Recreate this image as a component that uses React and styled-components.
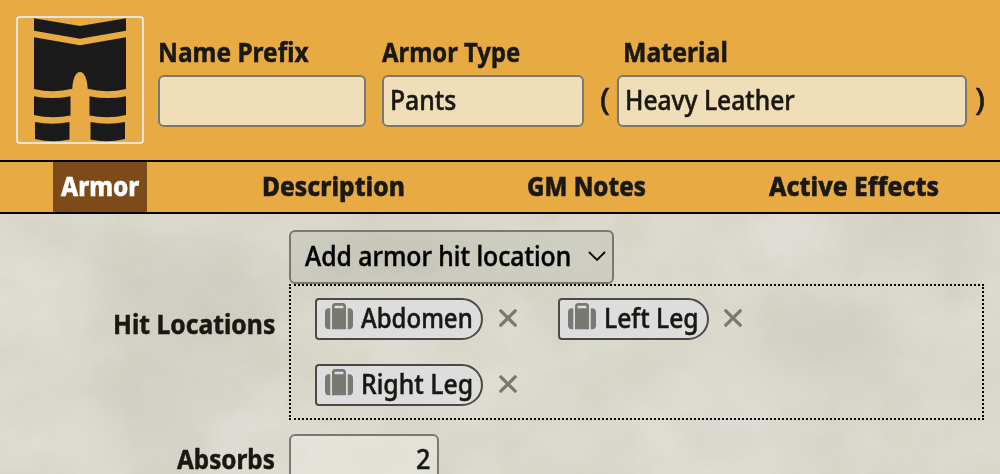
import React, { useLayoutEffect, useRef, useState } from "react";
import styled, { createGlobalStyle, css } from "styled-components";

const Global = createGlobalStyle`
  * { box-sizing: border-box; }
  html, body { margin: 0; padding: 0; overflow: hidden; }
  body {
    font-family: "Noto Sans", "Open Sans", sans-serif;
    font-size: 27px;
    line-height: 1;
    color: #191813;
    background: #d9d8cc;
  }
`;

const TextSlot = styled.span`
  display: flex;
  flex: none;
  width: ${(p) => p.$width}px;
  line-height: 26px;
  white-space: nowrap;
  -webkit-text-stroke: 0.5px currentColor;
`;

const TextInner = styled.span`
  display: inline-block;
  flex: none;
  transform-origin: 0 50%;
`;

/* Condenses a string horizontally so that it takes the given width. */
function Text({ width, children }) {
  const ref = useRef(null);
  const [scale, setScale] = useState(1);
  useLayoutEffect(() => {
    setScale(width / ref.current.offsetWidth);
  }, [width, children]);
  return (
    <TextSlot $width={width}>
      <TextInner ref={ref} style={{ transform: `scaleX(${scale})` }}>
        {children}
      </TextInner>
    </TextSlot>
  );
}

const Sheet = styled.div`
  width: 1000px;
  height: 474px;
  overflow: hidden;
  display: flex;
  flex-direction: column;
`;

const Header = styled.header`
  flex: none;
  height: 162px;
  padding: 16px 0 0 16px;
  display: flex;
  align-items: flex-start;
  background: #e8aa43;
  border-bottom: 2px solid #000;
`;

const Portrait = styled.div`
  width: 128px;
  height: 128px;
  margin-right: 14px;
  border: 2px solid #e6e3dd;
  border-radius: 4px;
  svg { display: block; }
`;

const Field = styled.div`
  width: ${(p) => p.$width}px;
  margin-right: ${(p) => p.$gap}px;
  padding-top: 23px;
`;

const FieldLabel = styled.div`
  height: 36px;
  padding-left: ${(p) => p.$indent || 0}px;
  font-weight: 700;
`;

const inputBox = css`
  border: 2px solid #7a7971;
  border-radius: 6px;
  display: flex;
  align-items: center;
`;

const TextInput = styled.div`
  ${inputBox}
  height: 52px;
  padding: 0 0 2px 6px;
  background: #f0deb8;
  font-weight: 500;
`;

const Paren = styled.div`
  width: ${(p) => p.$width}px;
  padding: 70px 0 0 1px;
  font-size: 30px;
`;

const Tabs = styled.nav`
  flex: none;
  height: 52px;
  display: flex;
  justify-content: space-around;
  background: #e8aa43;
  border-bottom: 2px solid #000;
`;

const Tab = styled.div`
  padding: 11px 8px 0;
  font-weight: 800;
  color: ${(p) => (p.$active ? "#fff" : "#191813")};
  background: ${(p) => (p.$active ? "#7d4a1a" : "transparent")};
`;

const Body = styled.main`
  position: relative;
  flex: 1;
  padding: 16px 16px 0 0;
`;

const Texture = styled.svg`
  position: absolute;
  inset: 0;
`;

const Row = styled.div`
  position: relative;
  display: flex;
  align-items: center;
  margin-bottom: 14px;
`;

const RowLabel = styled.div`
  width: 289px;
  padding: 0 14px 3px 0;
  display: flex;
  justify-content: flex-end;
  font-weight: 700;
`;

const RowContent = styled.div`
  flex: 1;
`;

const Select = styled.div`
  ${inputBox}
  width: 325px;
  height: 54px;
  padding: 0 6px 2px 14px;
  justify-content: space-between;
  background: rgba(0, 0, 0, 0.05);
  color: #000;
  font-weight: 500;
`;

const DropZone = styled.div`
  height: 136px;
  padding: 12px 24px;
  border: 2px dotted #000;
  display: flex;
  flex-wrap: wrap;
  align-content: flex-start;
  gap: 24px 41px;
`;

const Location = styled.div`
  display: flex;
  align-items: center;
  gap: 15px;
  &:nth-child(2) { margin-right: 100px; }
  > svg { margin: 0 0 3px 0.5px; }
`;

const Chip = styled.div`
  height: 42px;
  padding: 0 8px 2px 8px;
  display: flex;
  align-items: center;
  gap: 8px;
  border: 2px solid #4b4a44;
  border-radius: 4px 21px 21px 4px;
  background: #dddddd;
  font-weight: 500;
`;

const NumberInput = styled.div`
  ${inputBox}
  width: 150px;
  height: 52px;
  padding: 0 7px 2px 0;
  justify-content: flex-end;
  background: rgba(255, 255, 255, 0.25);
  font-weight: 500;
`;

const Pants = () => (
  <svg width="124" height="124" viewBox="18 18 124 124" fill="#1a1a1a">
    <path d="M34 18.3 80 26l46-7.7v12.5L80 38.7 34 30.8Z" />
    <path d="M34 37.2 80 45.2l46-8V89q-19.500 4.500-38.300-.2C87.200 79 84.500 72 80 72s-7.200 7-7.700 16.800Q53.500 93.500 34 89Z" />
    <path d="M34 96.200q18 3.800 36.500 0v19.200q-18 3.800-36.500-.4Z" />
    <path d="M126 96.200q-18 3.800-36.500 0v19.200q18 3.800 36.500-.4Z" />
    <path d="M35 122q17 3.400 34.500 0v17.500q-17 3.600-34.500-.5Z" />
    <path d="M125 122q-17 3.400-34.500 0v17.500q17 3.600 34.500-.5Z" />
  </svg>
);

const Suitcase = () => (
  <svg width="28" height="30" viewBox="0 0 512 548" fill="#7a7971">
    <path d="M176 56v40h160V56c0-4.400-3.600-8-8-8H184c-4.400 0-8 3.600-8 8zm-48 40V56c0-30.900 25.100-56 56-56h144c30.900 0 56 25.100 56 56v424H128V96zM64 96h32v384H64c-35.300 0-64-28.700-64-64V160c0-35.300 28.700-64 64-64zm384 384h-32V96h32c35.300 0 64 28.700 64 64v256c0 35.300-28.700 64-64 64z" />
  </svg>
);

const Cross = () => (
  <svg width="18" height="18" viewBox="0 0 18 18" stroke="#7a7971" strokeWidth="3.300" strokeLinecap="round">
    <path d="M1.800 1.800l14.400 14.400M16.200 1.800L1.800 16.200" />
  </svg>
);

const Chevron = () => (
  <svg width="18" height="10" viewBox="0 0 18 10" fill="none" stroke="#000" strokeWidth="1.800">
    <path d="M1 1l8 8 8-8" />
  </svg>
);

const blots = [
  [190, 90, 90, 60, "#d0cfc3"],
  [170, 200, 90, 45, "#d1d0c4"],
  [830, 130, 80, 40, "#d1d0c4"],
  [400, 40, 110, 30, "#d3d2c7"],
  [900, 10, 90, 30, "#d1d0c5"],
  [30, 70, 50, 50, "#e1dfd7"],
  [240, 225, 50, 35, "#e2e0d9"],
  [40, 225, 80, 35, "#dfddd4"],
  [790, 15, 60, 30, "#e2dfd9"],
  [720, 220, 90, 45, "#e0ded6"],
  [450, 160, 90, 60, "#dfddd3"],
  [960, 130, 40, 60, "#dfddd4"],
];

const Parchment = () => (
  <Texture width="1000" height="260" viewBox="0 0 1000 260">
    <defs>
      <filter id="soft" x="-50%" y="-80%" width="200%" height="260%">
        <feGaussianBlur stdDeviation="24" />
      </filter>
      <filter id="mottle" x="0" y="0" width="100%" height="100%" colorInterpolationFilters="sRGB">
        <feTurbulence type="fractalNoise" baseFrequency="0.014 0.016" numOctaves="5" seed="8" />
        <feColorMatrix values="0 0 0 0 0.660  0 0 0 0 0.655  0 0 0 0 0.580  1.100 0 0 0 -0.420" />
      </filter>
    </defs>
    <rect width="1000" height="260" fill="#dbdace" />
    {blots.map(([x, y, rx, ry, fill]) => (
      <ellipse key={`${x}-${y}`} cx={x} cy={y} rx={rx} ry={ry} fill={fill} filter="url(#soft)" />
    ))}
    <rect width="1000" height="260" filter="url(#mottle)" opacity="0.280" />
  </Texture>
);

const locations = [
  { name: "Abdomen", width: 112 },
  { name: "Left Leg", width: 95 },
  { name: "Right Leg", width: 112 },
];

export default function App() {
  return (
    <>
      <Global />
      <Sheet>
        <Header>
          <Portrait><Pants /></Portrait>
          <Field $width={208} $gap={16}>
            <FieldLabel><Text width={150.5}>Name Prefix</Text></FieldLabel>
            <TextInput />
          </Field>
          <Field $width={202} $gap={15}>
            <FieldLabel><Text width={138.5}>Armor Type</Text></FieldLabel>
            <TextInput><Text width={66}>Pants</Text></TextInput>
          </Field>
          <Paren $width={18}><Text width={10}>(</Text></Paren>
          <Field $width={350} $gap={7}>
            <FieldLabel $indent={6}><Text width={105}>Material</Text></FieldLabel>
            <TextInput><Text width={169.5}>Heavy Leather</Text></TextInput>
          </Field>
          <Paren $width={12}><Text width={10}>)</Text></Paren>
        </Header>
        <Tabs>
          <Tab $active><Text width={78}>Armor</Text></Tab>
          <Tab><Text width={142.5}>Description</Text></Tab>
          <Tab><Text width={119}>GM Notes</Text></Tab>
          <Tab><Text width={170}>Active Effects</Text></Tab>
        </Tabs>
        <Body>
          <Parchment />
          <Row>
            <RowLabel><Text width={162}>Hit Locations</Text></RowLabel>
            <RowContent>
              <Select>
                <Text width={266.5}>Add armor hit location</Text>
                <Chevron />
              </Select>
              <DropZone>
                {locations.map((l) => (
                  <Location key={l.name}>
                    <Chip><Suitcase /><Text width={l.width}>{l.name}</Text></Chip>
                    <Cross />
                  </Location>
                ))}
              </DropZone>
            </RowContent>
          </Row>
          <Row>
            <RowLabel><Text width={98}>Absorbs</Text></RowLabel>
            <NumberInput><Text width={14}>2</Text></NumberInput>
          </Row>
        </Body>
      </Sheet>
    </>
  );
}
